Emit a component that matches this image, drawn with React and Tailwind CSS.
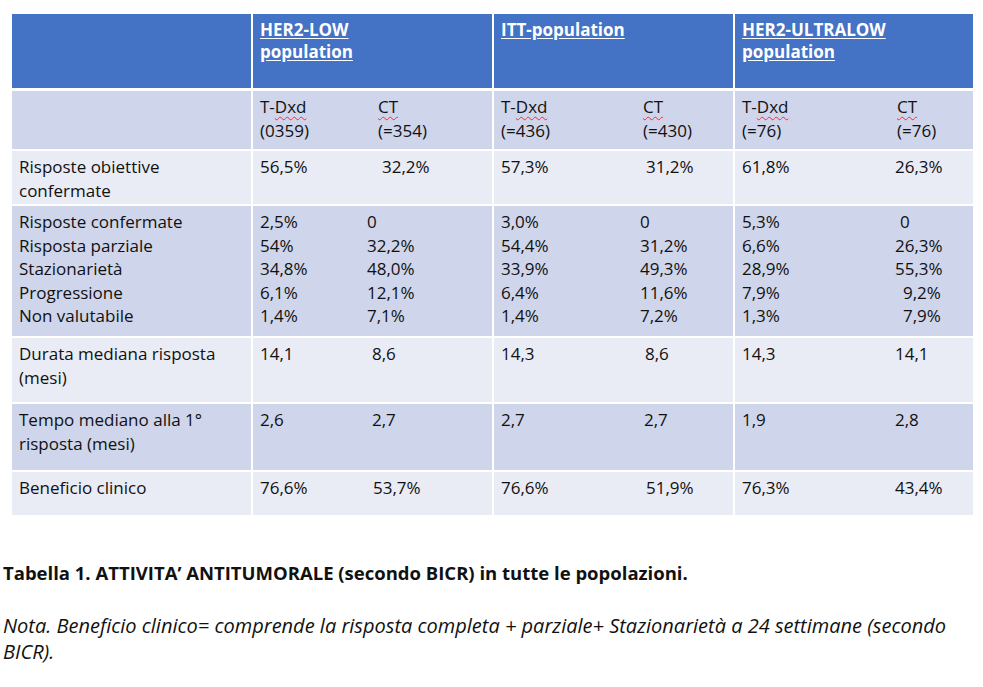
import React from "react";

const font = { fontFamily: '"Open Sans", "Noto Sans", sans-serif' };

const groups = ["HER2-LOW", "ITT-population", "HER2-ULTRALOW"];

const subHead = [
  { a: "(0359)", b: "(=354)", pad: "pl-[11px]" },
  { a: "(=436)", b: "(=430)", pad: "pl-[3px]" },
  { a: "(=76)", b: "(=76)", pad: "pl-[2px]" },
];

const rows = [
  {
    label: ["Risposte obiettive", "confermate"],
    bg: "bg-[#E9EBF5]",
    h: "h-[53px]",
    cells: [
      [["56,5%", "pl-[15px]", "32,2%"]],
      [["57,3%", "pl-[6px]", "31,2%"]],
      [["61,8%", "pl-[0px]", "26,3%"]],
    ],
  },
  {
    label: ["Risposte confermate", "Risposta parziale", "Stazionarietà", "Progressione", "Non valutabile"],
    bg: "bg-[#CFD5EA]",
    h: "h-[130px]",
    cells: [
      [
        ["2,5%", "pl-[0px]", "0"],
        ["54%", "pl-[0px]", "32,2%"],
        ["34,8%", "pl-[0px]", "48,0%"],
        ["6,1%", "pl-[0px]", "12,1%"],
        ["1,4%", "pl-[0px]", "7,1%"],
      ],
      [
        ["3,0%", "pl-[0px]", "0"],
        ["54,4%", "pl-[0px]", "31,2%"],
        ["33,9%", "pl-[0px]", "49,3%"],
        ["6,4%", "pl-[0px]", "11,6%"],
        ["1,4%", "pl-[0px]", "7,2%"],
      ],
      [
        ["5,3%", "pl-[5px]", "0"],
        ["6,6%", "pl-[0px]", "26,3%"],
        ["28,9%", "pl-[0px]", "55,3%"],
        ["7,9%", "pl-[8px]", "9,2%"],
        ["1,3%", "pl-[8px]", "7,9%"],
      ],
    ],
  },
  {
    label: ["Durata mediana risposta", "(mesi)"],
    bg: "bg-[#E9EBF5]",
    h: "h-[64px]",
    cells: [
      [["14,1", "pl-[5px]", "8,6"]],
      [["14,3", "pl-[5px]", "8,6"]],
      [["14,3", "pl-[0px]", "14,1"]],
    ],
  },
  {
    label: ["Tempo mediano alla 1°", "risposta (mesi)"],
    bg: "bg-[#CFD5EA]",
    h: "h-[66px]",
    cells: [
      [["2,6", "pl-[5px]", "2,7"]],
      [["2,7", "pl-[4px]", "2,7"]],
      [["1,9", "pl-[0px]", "2,8"]],
    ],
  },
  {
    label: ["Beneficio clinico"],
    bg: "bg-[#E9EBF5]",
    h: "h-[43px]",
    cells: [
      [["76,6%", "pl-[6px]", "53,7%"]],
      [["76,6%", "pl-[6px]", "51,9%"]],
      [["76,3%", "pl-[0px]", "43,4%"]],
    ],
  },
];

// where the second value starts inside each data cell
const secondCol = ["w-[107px]", "w-[139px]", "w-[153px]"];

function Spell({ children }) {
  return (
    <span className="underline decoration-wavy decoration-red-500 decoration-1 underline-offset-[3px]">
      {children}
    </span>
  );
}

export default function App() {
  return (
    <div className="w-[983px] h-[687px] bg-white text-[#111]" style={font}>
      <div className="pt-[14px] pl-[12px]">
        <div className="grid grid-cols-[239px_239px_239px_238px] gap-x-[2px] gap-y-[2px] text-[17px] leading-[23.5px]">
          {/* header */}
          <div className="bg-[#4472C4] h-[74px] mb-[1px]"></div>
          {groups.map((g, i) => (
            <div key={g} className="bg-[#4472C4] h-[74px] mb-[1px] pl-[7px] pt-[5px] text-white font-bold leading-[22px]">
              <span className="underline decoration-white underline-offset-[2px]">{g}</span>
              {i !== 1 && (
                <>
                  <br />
                  <span className="underline decoration-white underline-offset-[2px]">population</span>
                </>
              )}
            </div>
          ))}

          {/* sub header */}
          <div className="bg-[#CFD5EA] h-[58px]"></div>
          {subHead.map((s, i) => (
            <div key={i} className="bg-[#CFD5EA] h-[58px] pl-[7px] pt-[4px] flex">
              <div className={secondCol[i]}>
                T-<Spell>Dxd</Spell>
                <br />
                {s.a}
              </div>
              <div className={s.pad}>
                <Spell>CT</Spell>
                <br />
                {s.b}
              </div>
            </div>
          ))}

          {rows.map((r, ri) => (
            <React.Fragment key={ri}>
              <div className={`${r.bg} ${r.h} pl-[7px] pt-[4px]`}>
                {r.label.map((l) => (
                  <div key={l}>{l}</div>
                ))}
              </div>
              {r.cells.map((c, ci) => (
                <div key={ci} className={`${r.bg} ${r.h} pl-[7px] pt-[4px]`}>
                  {c.map(([a, pad, b], k) => (
                    <div key={k} className="flex">
                      <div className={secondCol[ci]}>{a}</div>
                      <div className={pad}>{b}</div>
                    </div>
                  ))}
                </div>
              ))}
            </React.Fragment>
          ))}
        </div>
      </div>

      <div className="pl-[3px] pt-[44px]">
        <p className="font-bold text-[18.5px]">
          Tabella 1. ATTIVITA’ ANTITUMORALE (secondo BICR) in tutte le popolazioni.
        </p>
        <p className="italic mt-[26px] text-[20px] leading-[26px] w-[958px]">
          Nota. Beneficio clinico= comprende la risposta completa + parziale+ Stazionarietà a 24 settimane (secondo BICR).
        </p>
      </div>
    </div>
  );
}
